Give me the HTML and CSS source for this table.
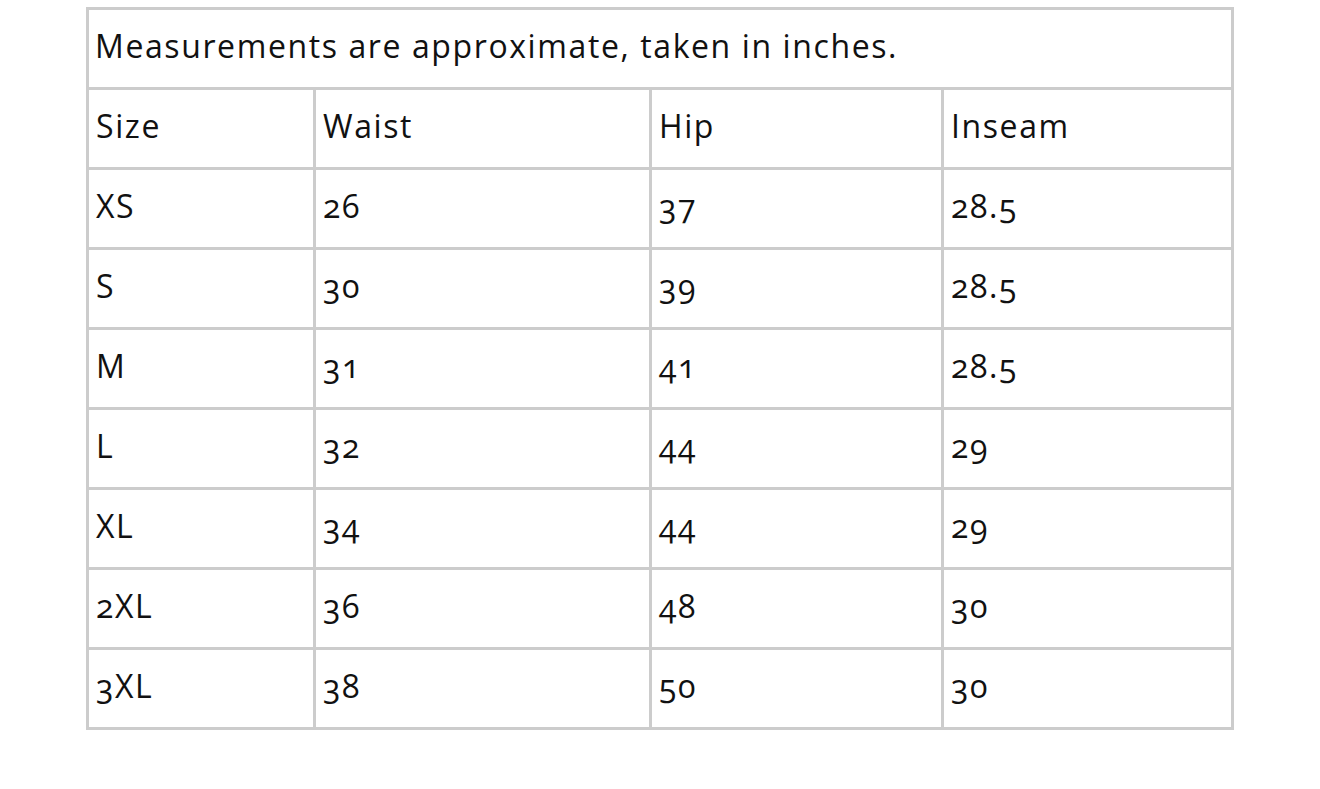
FILE: index.html
```html
<!DOCTYPE html>
<html>
<head>
<meta charset="utf-8">
<link rel="stylesheet" href="styles.css">
</head>
<body>
<table class="sizes">
  <colgroup>
    <col class="c1"><col class="c2"><col class="c3"><col class="c4">
  </colgroup>
  <tr><td colspan="4">Measurements are approximate, taken in inches.</td></tr>
  <tr><td>Size</td><td>Waist</td><td>Hip</td><td>Inseam</td></tr>
  <tr><td>XS</td><td>26</td><td>37</td><td>28.5</td></tr>
  <tr><td>S</td><td>30</td><td>39</td><td>28.5</td></tr>
  <tr><td>M</td><td>31</td><td>41</td><td>28.5</td></tr>
  <tr><td>L</td><td>32</td><td>44</td><td>29</td></tr>
  <tr><td>XL</td><td>34</td><td>44</td><td>29</td></tr>
  <tr><td>2XL</td><td>36</td><td>48</td><td>30</td></tr>
  <tr><td>3XL</td><td>38</td><td>50</td><td>30</td></tr>
</table>
</body>
</html>
```
FILE: styles.css
```css
html, body { margin: 0; padding: 0; background: #fff; }
body { font-family: "Open Sans", "Lato", sans-serif; color: #111; }
.sizes {
  border-collapse: collapse;
  table-layout: fixed;
  width: 1148px;
  margin: 7px auto 0;
  border: 3px solid #cccccc;
}
.c1 { width: 227px; }
.c2 { width: 336px; }
.c3 { width: 292px; }
.c4 { width: 290px; }
.sizes td {
  border: 3px solid #cccccc;
  height: 71px;
  padding: 0 6px 6px 7px;
  vertical-align: middle;
  font-size: 32px;
  font-weight: 400;
  letter-spacing: 1.6px;
  line-height: 40px;
  white-space: nowrap;
  font-variant-numeric: oldstyle-nums;
}
.sizes tr:first-child td { padding-left: 6px; }
```
